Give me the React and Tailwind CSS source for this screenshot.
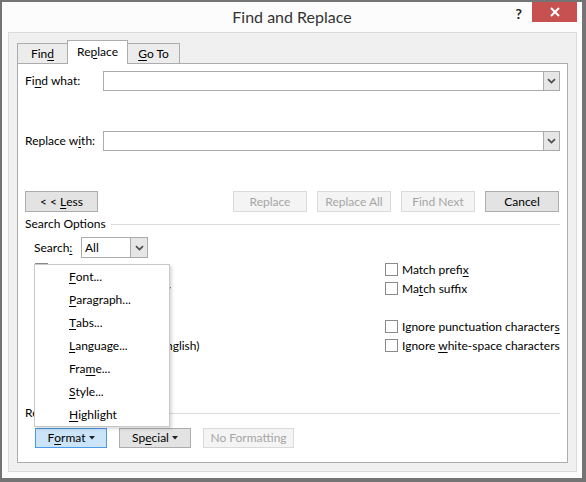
import React from "react";

const U = ({ children }) => (
  <span className="underline decoration-1 underline-offset-[2px]">{children}</span>
);

const Chevron = () => (
  <svg width="9" height="6" viewBox="0 0 9 6">
    <path d="M1 1.2L4.5 4.6L8 1.2" stroke="#4d4d4d" strokeWidth="1.7" fill="none" />
  </svg>
);

const Caret = () => (
  <svg width="6" height="4" viewBox="0 0 6 4" className="ml-[3px]">
    <path d="M0 0H6L3 3.5Z" fill="#222" />
  </svg>
);

function Combo() {
  return (
    <div className="h-[20px] flex-1 flex border border-[#ababab] bg-white">
      <div className="flex-1" />
      <div className="w-[17px] -my-px -mr-px border border-[#ababab] bg-[#e6e6e6] flex items-center justify-center">
        <Chevron />
      </div>
    </div>
  );
}

function Btn({ children, disabled, w = "w-[74px]", blue }) {
  const cls = blue
    ? "bg-[#cce4f7] border-[#4c9be8] text-black"
    : disabled
    ? "bg-[#f4f4f4] border-[#dadada] text-[#a6a6a6]"
    : "bg-[#e3e3e3] border-[#adadad] text-black";
  return (
    <div className={`${w} h-full border ${cls} flex items-center justify-center leading-none`}>
      {children}
    </div>
  );
}

function Check({ children }) {
  return (
    <div className="h-[19px] flex items-start">
      <div className="w-[13px] h-[13px] border border-[#8a8a8a] bg-white shrink-0" />
      <div className="ml-[4px] leading-[13px] whitespace-nowrap">{children}</div>
    </div>
  );
}

function Section({ label }) {
  return (
    <div className="h-[14px] flex items-center">
      <span className="leading-none">{label}</span>
      <div className="flex-1 h-px bg-[#dcdcdc] ml-[5px]" />
    </div>
  );
}

export default function App() {
  return (
    <div className="w-[586px] h-[482px] bg-[#747474] pl-[2px] pt-[2px] pr-[4px] pb-[4px] font-['Segoe_UI','Lato',sans-serif] text-[12px] text-black">
      <div className="w-full h-full bg-[#fcfcfc] flex flex-col">
        {/* title bar */}
        <div className="h-[30px] grid grid-cols-[1fr_auto_1fr] shrink-0">
          <div />
          <div className="text-[16px] text-[#333] pt-[5px] leading-[20px]">
            Find and Replace
          </div>
          <div className="flex justify-end items-start pr-[5px]">
            <div className="mr-[10px] pt-[2px] text-[14px] font-bold text-[#222] leading-[20px]">?</div>
            <div className="w-[45px] h-[20px] bg-[#c75050] flex items-center justify-center">
              <svg width="10" height="10" viewBox="0 0 10 10">
                <path d="M1 1L9 9M9 1L1 9" stroke="#fff" strokeWidth="2" />
              </svg>
            </div>
          </div>
        </div>

        {/* client */}
        <div className="flex-1 ml-[6px] mr-[5px] mb-[6px] border border-[#dadada] bg-[#f0f0f0] pl-[8px] pr-[8px] pt-[7px] pb-[8px] flex flex-col">
          {/* tabs */}
          <div className="h-[24px] flex items-end relative z-10 shrink-0">
            <div className="w-[51px] h-[20px] mb-[1px] border border-b-0 border-[#acacac] bg-[#ececec] flex items-center justify-center leading-none">
              Fin<U>d</U>
            </div>
            <div className="w-[61px] -ml-px h-[24px] border border-b-0 border-[#acacac] bg-white flex items-center justify-center leading-none pb-[2px]">
              Re<U>p</U>lace
            </div>
            <div className="w-[53px] -ml-px h-[20px] mb-[1px] border border-b-0 border-[#acacac] bg-[#ececec] flex items-center justify-center leading-none">
              <U>G</U>o To
            </div>
          </div>

          {/* panel */}
          <div className="flex-1 -mt-px border border-[#acacac] bg-white relative px-[7px] pt-[7px] flex flex-col">
            <div className="flex items-center h-[20px]">
              <div className="w-[78px]">Fi<U>n</U>d what:</div>
              <Combo />
            </div>
            <div className="flex items-center h-[20px] mt-[40px]">
              <div className="w-[78px]">Replace w<U>i</U>th:</div>
              <Combo />
            </div>

            <div className="flex h-[21px] mt-[40px]">
              <Btn w="w-[73px]">
                <span className="whitespace-pre">{"< < "}</span>
                <U>L</U>
                <span>ess</span>
              </Btn>
              <div className="flex-1" />
              <div className="flex gap-[10px] mr-[1px] h-full">
                <Btn disabled>Replace</Btn>
                <Btn disabled>Replace All</Btn>
                <Btn disabled>Find Next</Btn>
                <Btn>Cancel</Btn>
              </div>
            </div>

            <div className="mt-[5px]">
              <Section label="Search Options" />
            </div>

            <div className="flex items-center h-[21px] mt-[6px] pl-[9px]">
              <div className="w-[47px]">
                Search<U>:</U>
              </div>
              <div className="w-[67px] h-full border border-[#ababab] bg-white flex">
                <div className="flex-1 pl-[3px] leading-[19px]">All</div>
                <div className="w-[18px] -my-px -mr-px border border-[#ababab] bg-[#e6e6e6] flex items-center justify-center">
                  <Chevron />
                </div>
              </div>
            </div>

            <div className="grid grid-cols-[350px_1fr] mt-[5px] pl-[10px]">
              <div className="flex flex-col">
                <Check>Mat<U>c</U>h case</Check>
                <Check>Find wh<U>o</U>le words only</Check>
                <Check>Use wil<U>d</U>cards</Check>
                <Check>Sounds li<U>k</U>e (English)</Check>
                <Check>Find all <U>w</U>ord forms (English)</Check>
              </div>
              <div className="flex flex-col">
                <Check>Match prefi<U>x</U></Check>
                <Check>Ma<U>t</U>ch suffix</Check>
                <div className="h-[19px]" />
                <Check>Ignore punctuation character<U>s</U></Check>
                <Check>Ignore <U>w</U>hite-space characters</Check>
              </div>
            </div>

            <div className="mt-[48px]">
              <Section label="Replace" />
            </div>

            <div className="flex h-[20px] mt-[8px] pl-[10px] gap-[12px]">
              <Btn blue w="w-[72px]">
                F<U>o</U>rmat
                <Caret />
              </Btn>
              <Btn w="w-[72px]">
                Sp<U>e</U>cial
                <Caret />
              </Btn>
              <Btn disabled w="w-[91px]">No Formatting</Btn>
            </div>

            {/* dropdown menu */}
            <div className="absolute left-[16px] top-[200px] w-[136px] h-[163px] bg-white border border-[#c8c8c8] shadow-[2px_2px_3px_rgba(0,0,0,0.15)] pt-[1px] flex flex-col">
              {[
                [<U key="a">F</U>, "ont..."],
                [<U key="a">P</U>, "aragraph..."],
                [<U key="a">T</U>, "abs..."],
                [<U key="a">L</U>, "anguage..."],
                ["Fra", <U key="a">m</U>, "e..."],
                [<U key="a">S</U>, "tyle..."],
                [<U key="a">H</U>, "ighlight"],
              ].map((parts, i) => (
                <div key={i} className="h-[23px] flex items-center pl-[34px] leading-none">
                  {parts}
                </div>
              ))}
            </div>
          </div>
        </div>
      </div>
    </div>
  );
}
